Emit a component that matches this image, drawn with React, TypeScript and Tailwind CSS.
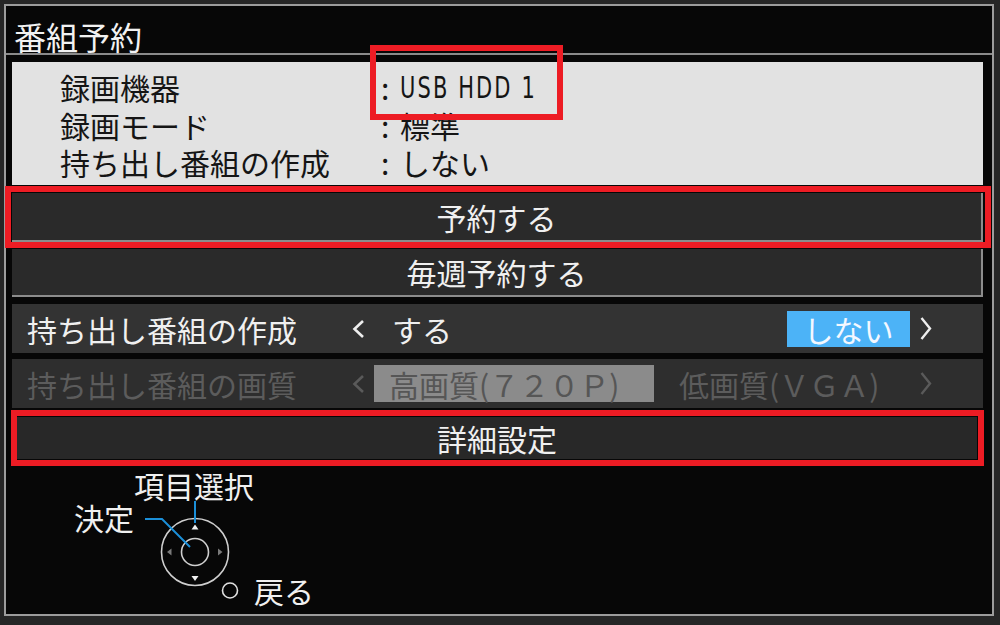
import React from "react";

const ChevL = ({ color }: { color: string }) => (
  <svg width="13" height="18" viewBox="0 0 13 18" className="shrink-0">
    <polyline points="11,1 2.5,9 11,17" fill="none" stroke={color} strokeWidth="2.6" />
  </svg>
);

const ChevR = ({ color }: { color: string }) => (
  <svg width="12" height="23" viewBox="0 0 12 23" className="shrink-0">
    <polyline points="1.5,1 10,11.5 1.5,22" fill="none" stroke={color} strokeWidth="2.4" />
  </svg>
);

function InfoRow({ label, value, latin }: { label: string; value: string; latin?: boolean }) {
  return (
    <div className="flex items-center h-[37.5px]">
      <span className="w-[321px] shrink-0">{label}</span>
      <span className="w-[19px] shrink-0">:</span>
      {latin ? (
        <span className="inline-block origin-left scale-x-[0.7] font-['DejaVu_Sans','Liberation_Sans',sans-serif] text-[30px] tracking-[3px] whitespace-pre">
          {value}
        </span>
      ) : (
        <span>{value}</span>
      )}
    </div>
  );
}

export default function App() {
  return (
    <div className="w-[1000px] h-[625px] bg-[#262626] pt-[4px] pl-[4px] font-['Noto_Sans_CJK_JP','Noto_Sans',sans-serif]">
      <div className="w-[990px] h-[612px] border-2 border-[#9c9c9c] bg-[#070707] flex flex-col">
        {/* Title */}
        <div className="h-[49px] shrink-0 border-b-2 border-[#8a8a8a] pl-[8px] pt-[14px] text-[32px] leading-[32px] text-[#f2f2f2]">
          番組予約
        </div>

        <div className="flex flex-col pl-[6px] pr-[9px] pt-[7px]">
          {/* Info box */}
          <div className="relative h-[123px] bg-[#e2e2e2] pt-[7px] pl-[48px] text-[30px] leading-[37.5px] text-[#151515]">
            <InfoRow label="録画機器" value="USB HDD 1" latin />
            <InfoRow label="録画モード" value="標準" />
            <InfoRow label="持ち出し番組の作成" value="しない" />
            <div className="pointer-events-none absolute left-[358px] top-[-17px] w-[193px] h-[75px] border-[6px] border-[#ed1c24]" />
          </div>

          {/* 予約する */}
          <div className="relative mt-[8px] h-[49px] bg-[#2a2a2a] border-r-2 border-b-2 border-[#8c8c8c] flex items-center justify-center text-[30px] leading-[30px] text-[#f0f0f0]">
            予約する
            <div className="pointer-events-none absolute left-[-7px] top-[-7px] right-[-10px] bottom-[-8px] border-[6px] border-[#ed1c24]" />
          </div>

          {/* 毎週予約する */}
          <div className="mt-[7px] h-[48px] bg-[#2a2a2a] border-r-2 border-b-2 border-[#8c8c8c] flex items-center justify-center text-[30px] leading-[30px] text-[#f0f0f0]">
            毎週予約する
          </div>

          {/* 持ち出し番組の作成 */}
          <div className="mt-[7px] h-[49px] bg-[#333333] flex items-center pl-[15px] pr-[51px] text-[30px] leading-[30px] text-[#f0f0f0]">
            <span className="w-[325px] shrink-0">持ち出し番組の作成</span>
            <ChevL color="#eeeeee" />
            <span className="ml-[27px]">する</span>
            <div className="flex-1" />
            <div className="w-[123px] h-[36px] bg-[#4cb3f7] flex items-center justify-center text-[#f4f8ff]">しない</div>
            <div className="ml-[10px] flex items-center">
              <ChevR color="#eeeeee" />
            </div>
          </div>

          {/* 持ち出し番組の画質 (disabled) */}
          <div className="mt-[6px] h-[49px] bg-[#2e2e2e] flex items-center pl-[15px] pr-[51px] text-[30px] leading-[30px] text-[#5c5c5c]">
            <span className="w-[325px] shrink-0">持ち出し番組の画質</span>
            <ChevL color="#5a5a5a" />
            <div className="ml-[9px] w-[280px] h-[37px] bg-[#8b8b8b] flex items-center pl-[15px] text-[#565656]">
              高画質(７２０Ｐ)
            </div>
            <span className="ml-[25px]">低画質(ＶＧＡ)</span>
            <div className="flex-1" />
            <ChevR color="#5a5a5a" />
          </div>

          {/* 詳細設定 */}
          <div className="relative mt-[9px] ml-[5px] mr-[6px] h-[42px] bg-[#282828] flex items-center justify-center text-[30px] leading-[30px] text-[#f0f0f0]">
            詳細設定
            <div className="pointer-events-none absolute left-[-6px] top-[-7px] right-[-7px] bottom-[-7px] border-[6px] border-[#ed1c24]" />
          </div>

          {/* Remote diagram */}
          <div className="relative mt-[7px] h-[148px] text-[30px] leading-[30px] text-[#f0f0f0]">
            <svg className="absolute left-0 top-0" width="400" height="148" viewBox="0 0 400 148">
              <circle cx="183" cy="86" r="33.5" fill="none" stroke="#cfcfcf" strokeWidth="1.6" />
              <circle cx="183" cy="86" r="13.5" fill="none" stroke="#cfcfcf" strokeWidth="1.6" />
              <polygon points="183,58.5 179.5,63.5 186.5,63.5" fill="#f0f0f0" />
              <polygon points="179.5,110 186.5,110 183,115" fill="#f0f0f0" />
              <polygon points="155,86 159.5,82.5 159.5,89.5" fill="#7a7a7a" />
              <polygon points="210.5,86 206,82.5 206,89.5" fill="#7a7a7a" />
              <line x1="183" y1="35" x2="183" y2="57" stroke="#1b8fd8" strokeWidth="2" />
              <polyline points="133,53 150,53 178,81" fill="none" stroke="#1b8fd8" strokeWidth="2" />
              <circle cx="218" cy="124.5" r="7.5" fill="none" stroke="#e0e0e0" strokeWidth="1.6" />
            </svg>
            <span className="absolute left-[122px] top-[4px]">項目選択</span>
            <span className="absolute left-[62px] top-[36px]">決定</span>
            <span className="absolute left-[242px] top-[109px]">戻る</span>
          </div>
        </div>
      </div>
    </div>
  );
}
